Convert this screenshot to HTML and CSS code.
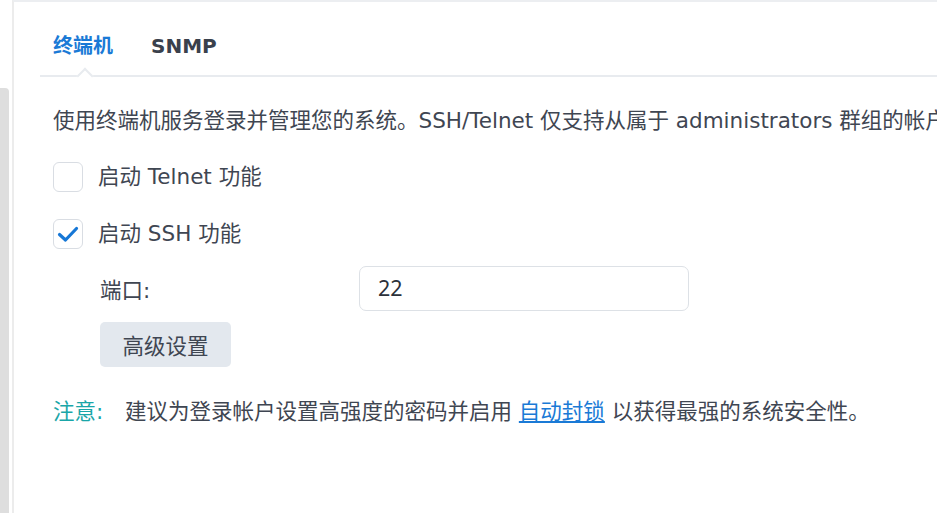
FILE: index.html
```html
<!DOCTYPE html>
<html lang="zh-CN">
<head>
<meta charset="utf-8">
<link rel="stylesheet" href="styles.css">
</head>
<body>
<div class="app">
  <div class="scrollbar"><div class="thumb"></div></div>
  <div class="panel">
    <div class="tabs">
      <div class="tab active">终端机</div>
      <div class="tab">SNMP</div>
    </div>
    <div class="content">
      <p class="desc">使用终端机服务登录并管理您的系统。SSH/Telnet 仅支持从属于 administrators 群组的帐户登录。</p>
      <label class="check-row">
        <span class="box"></span>
        <span class="label">启动 Telnet 功能</span>
      </label>
      <label class="check-row">
        <span class="box checked">
          <svg viewBox="0 0 28 28" width="28" height="28"><path d="M5.5 14.5 L11.5 20 L22.5 8.5" fill="none" stroke="#1677d6" stroke-width="3.2" stroke-linecap="round" stroke-linejoin="round"/></svg>
        </span>
        <span class="label">启动 SSH 功能</span>
      </label>
      <div class="sub">
        <div class="field-row">
          <span class="field-label">端口:</span>
          <div class="input">22</div>
        </div>
        <button class="btn">高级设置</button>
      </div>
      <p class="note"><span class="note-title">注意:</span><span class="note-text">建议为登录帐户设置高强度的密码并启用 <a class="link">自动封锁</a> 以获得最强的系统安全性。</span></p>
    </div>
  </div>
</div>
</body>
</html>
```
FILE: styles.css
```css
* { box-sizing: border-box; }
html, body {
  margin: 0;
  width: 937px;
  height: 513px;
  overflow: hidden;
  background: #fff;
}
body {
  font-family: "DejaVu Sans", "Noto Sans CJK SC", sans-serif;
  color: #3f4652;
  font-size: 21.5px;
}
.app {
  display: flex;
  height: 513px;
}
.scrollbar {
  width: 9px;
  padding-top: 88px;
  flex: none;
}
.thumb {
  height: 100%;
  background: #dedede;
  border-radius: 0 4px 0 0;
}
.panel {
  margin-left: 3px;
  flex: 1;
  border-left: 2px solid #ececec;
  border-top: 2px solid #eceef1;
  padding-left: 26px;
  min-width: 0;
}
.tabs {
  display: flex;
  gap: 38px;
  height: 75px;
  padding-left: 13px;
  padding-top: 29px;
  border-bottom: 2px solid #e8ebef;
}
.tab {
  position: relative;
  font-weight: 700;
  font-size: 20px;
  line-height: 30px;
  height: 30px;
  color: #3a414c;
}
.tab.active { color: #1a7ad6; }
.tab.active::after {
  content: "";
  position: absolute;
  left: 50%;
  top: 39px;
  width: 10px;
  height: 10px;
  margin-left: -4px;
  background: #fff;
  border-left: 2px solid #e8ebef;
  border-top: 2px solid #e8ebef;
  transform: rotate(45deg);
}
.content {
  padding-left: 13px;
  white-space: nowrap;
  overflow: hidden;
}
.desc {
  margin: 30px 0 0;
  line-height: 28px;
}
.check-row {
  display: flex;
  align-items: center;
  gap: 15px;
  height: 30px;
  margin-top: 27px;
}
.box {
  width: 30px;
  height: 30px;
  border: 1.5px solid #d9dde3;
  border-radius: 6px;
  display: flex;
  align-items: center;
  justify-content: center;
  flex: none;
}
.box svg { display: block; }
.label { line-height: 30px; }
.sub {
  padding-left: 47px;
  margin-top: 17px;
}
.field-row {
  display: flex;
  align-items: center;
  height: 45px;
}
.field-label {
  width: 259px;
}
.input {
  width: 330px;
  height: 45px;
  border: 1.5px solid #dde1e6;
  border-radius: 7px;
  padding-left: 18px;
  line-height: 42px;
  color: #2b313a;
  font-family: "Noto Sans", sans-serif;
}
.btn {
  display: block;
  margin-top: 11px;
  width: 131px;
  height: 45px;
  border: none;
  border-radius: 5px;
  background: #e3e8ee;
  font: inherit;
  color: #3f4652;
  padding: 0;
}
.note {
  margin: 31px 0 0;
  line-height: 28px;
  display: flex;
}
.note-title {
  color: #1aa6a8;
  width: 72px;
}
.link {
  color: #1a7ad6;
  text-decoration: underline;
}
```
